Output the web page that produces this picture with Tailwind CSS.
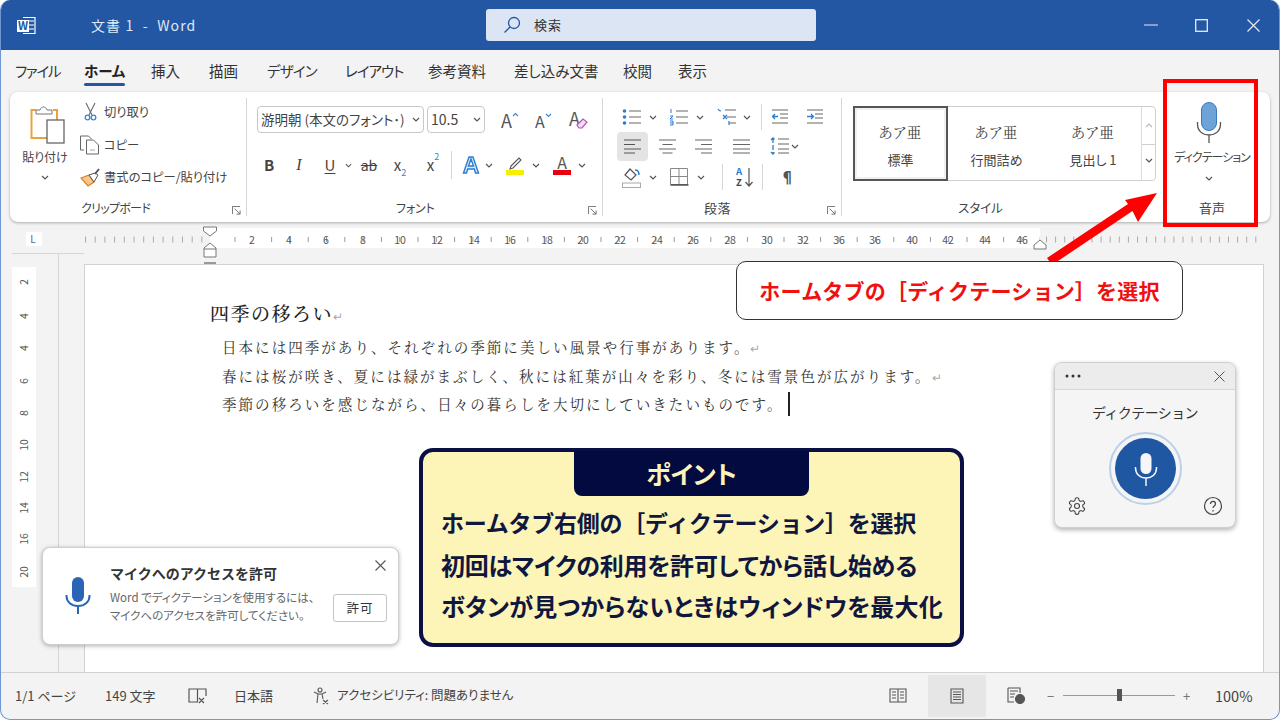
<!DOCTYPE html>
<html lang="ja"><head><meta charset="utf-8">
<script src="https://cdn.jsdelivr.net/npm/@tailwindcss/browser@4"></script></head>
<body class="bg-white">
<svg width="0" height="0" class="absolute"><defs>
<symbol id="chev" viewBox="0 0 8 5"><path d="M1 1l3 3 3-3" fill="none" stroke="#555" stroke-width="1.2"/></symbol>
<symbol id="launch" viewBox="0 0 10 10"><path d="M.5 9V.5H9M3 3l6 6M9 5v4H5" fill="none" stroke="#666" stroke-width="1"/></symbol>
</defs></svg>
<div class="relative w-[1280px] h-[720px] overflow-hidden font-['Noto_Sans_CJK_JP',sans-serif] [font-feature-settings:'palt'] text-[#333]">
 <div class="flex flex-col w-full h-full box-border border-x border-b border-[#6f97d1] rounded-[10px] overflow-hidden bg-[#f3f3f3]">
  <!-- title bar -->
  <div class="relative h-[50px] shrink-0 bg-[#2457a3] flex items-center -mx-px text-[#dfe8f6]">
   <svg class="ml-[16px]" width="20" height="20" viewBox="0 0 20 20"><path d="M7 2.5h12v16H7" fill="none" stroke="#fff" stroke-width="1.2"/><path d="M13 6h5M13 10h5M13 14h5" stroke="#fff" stroke-width="1.2"/><rect x="1" y="5" width="12" height="12" fill="#fff"/><text x="7" y="15" font-size="11" font-weight="700" text-anchor="middle" fill="#2457a3">W</text></svg>
   <div class="ml-[55px] text-[14px] tracking-[1.1px] w-[395px] whitespace-pre">文書 1  -  Word</div>
   <div class="w-[330px] h-[32px] bg-[#dbe5f3] rounded-[3px] flex items-center pl-[16px] text-[#333] text-[13px]">
    <svg width="20" height="20" viewBox="0 0 20 20" fill="none" stroke="#2457a3" stroke-width="1.3"><circle cx="12" cy="8" r="5.5"/><path d="M8 12l-5.5 5.5"/></svg>
    <span class="ml-[12px] tracking-[1px]">検索</span>
   </div>
   <svg class="ml-[328px]" width="14" height="2" viewBox="0 0 14 2"><path d="M0 1h14" stroke="#e4ecf8" stroke-width="1.2"/></svg>
   <svg class="ml-[37px]" width="13" height="13" viewBox="0 0 13 13"><rect x=".7" y=".7" width="11.6" height="11.6" fill="none" stroke="#e4ecf8" stroke-width="1.3"/></svg>
   <svg class="ml-[39px]" width="13" height="13" viewBox="0 0 13 13"><path d="M.5.5l12 12M12.5.5l-12 12" stroke="#e4ecf8" stroke-width="1.2"/></svg>
  </div>
  <!-- tabs -->
  <div class="h-[42px] shrink-0 flex items-center pl-[14px] text-[14.5px] text-[#333]">
   <span class="w-[69px] tracking-[-1.2px]">ファイル</span>
   <span class="w-[67px] relative font-bold text-[#222]">ホーム<span class="absolute left-0 top-[23px] w-[41px] h-[3px] bg-[#2457a3] rounded-sm"></span></span>
   <span class="w-[58px]">挿入</span>
   <span class="w-[58px]">描画</span>
   <span class="w-[78px] tracking-[-.8px]">デザイン</span>
   <span class="w-[83px] tracking-[-1px]">レイアウト</span>
   <span class="w-[86px]">参考資料</span>
   <span class="w-[109px]">差し込み文書</span>
   <span class="w-[55px]">校閲</span>
   <span>表示</span>
  </div>
  <!-- ribbon -->
  <div class="h-[130px] shrink-0 ml-[9px] mr-[9px] bg-white rounded-[8px] shadow-[0_1px_3px_rgba(0,0,0,.3)] flex text-[#444]">
   <!-- clipboard -->
   <div class="w-[236px] flex flex-col">
    <div class="h-[102px] flex">
     <div class="w-[70px] flex flex-col items-center pt-[13px]">
      <svg class="ml-[6px]" width="36" height="40" viewBox="0 0 36 40"><path d="M6 5H1.500v28H17" fill="none" stroke="#eba23c" stroke-width="2"/><path d="M23 5h4v10" fill="none" stroke="#eba23c" stroke-width="2"/><path d="M6 9V5h4c1-4 6-4 7 0h5v4z" fill="#fff" stroke="#777"/><rect x="17" y="15" width="17" height="23" fill="#fff" stroke="#666" stroke-width="1.300"/></svg>
      <div class="text-[12px] mt-[3px] leading-[18px] text-[#444]">貼り付け</div>
      <svg class="mt-[9px]" width="8" height="5"><use href="#chev"/></svg>
     </div>
     <div class="pt-[4px] flex flex-col text-[12.3px] text-[#444]">
      <div class="h-[33px] flex items-center"><svg class="w-[24px]" width="24" height="20" viewBox="0 0 24 20" fill="none"><path d="M6 1l6 12M15 1L9 13" stroke="#666" stroke-width="1.1"/><circle cx="7.5" cy="15.5" r="2.3" stroke="#3a86d0" stroke-width="1.3"/><circle cx="13.5" cy="15.5" r="2.3" stroke="#3a86d0" stroke-width="1.3"/></svg><span>切り取り</span></div>
      <div class="h-[33px] flex items-center"><svg class="w-[24px]" width="24" height="20" viewBox="0 0 24 20" fill="none" stroke="#666"><path d="M4 15H.5V1h8l3 3"/><path d="M6.500 5h7l5 5v9h-12z" fill="#fff"/><path d="M10 15h5" stroke="#aaa"/></svg><span>コピー</span></div>
      <div class="h-[33px] flex items-center"><svg class="w-[24px]" width="24" height="20" viewBox="0 0 24 20" fill="none"><path d="M1 10l8-3 5 7-6 4z" fill="#f6c88e" stroke="#e07f20" stroke-width="1.3"/><path d="M9 7l5 7 4-7-3-2z" fill="#fff" stroke="#555"/><path d="M15 6l4-5" stroke="#555" stroke-width="2"/></svg><span>書式のコピー/貼り付け</span></div>
     </div>
    </div>
    <div class="relative h-[28px] flex items-center pl-[71px] text-[12px] tracking-[-.7px]">クリップボード<svg class="absolute right-[5px] top-[12px]" width="9" height="9"><use href="#launch"/></svg></div>
   </div>
   <div class="w-px my-[6px] bg-[#d6d6d6]"></div>
   <!-- font -->
   <div class="w-[355px] flex flex-col">
    <div class="h-[102px] pl-[10px] pt-[14px]">
     <div class="flex items-center h-[27px]">
      <div class="w-[167px] h-[27px] box-border border border-[#c8c8c8] rounded-[4px] flex items-center justify-between px-[3px] text-[13.5px] whitespace-nowrap overflow-hidden"><span>游明朝 (本文のフォント･)</span><svg class="shrink-0" width="8" height="5"><use href="#chev"/></svg></div>
      <div class="ml-[3px] w-[58px] h-[27px] box-border border border-[#c8c8c8] rounded-[4px] flex items-center justify-between pl-[3px] pr-[3px] text-[14px]"><span>10.5</span><svg width="8" height="5"><use href="#chev"/></svg></div>
      <svg class="ml-[16px] overflow-visible" width="20" height="20" viewBox="0 0 20 20"><text x="0" y="17.500" font-size="18" fill="#555">A</text><path d="M12 6l2.500-2.500L17 6" fill="none" stroke="#3a86d0" stroke-width="1.100"/></svg>
      <svg class="ml-[14px] overflow-visible" width="20" height="20" viewBox="0 0 20 20"><text x="0" y="17.500" font-size="16" fill="#555">A</text><path d="M11 4l2.500 2.500L16 4" fill="none" stroke="#3a86d0" stroke-width="1.100"/></svg>
      <svg class="ml-[14px] overflow-visible" width="20" height="20" viewBox="0 0 20 20"><text x="0" y="16" font-size="18" fill="#555">A</text><path d="M8 15l6-6 4 3-5 6h-3z" fill="#f3dcf3" stroke="#b455b8" stroke-width="1.200"/></svg>
     </div>
     <div class="flex items-center h-[28px] mt-[18px] text-[#444]">
      <span class="w-[24px] text-center text-[15px] font-bold">B</span>
      <span class="ml-[6px] w-[24px] text-center text-[16px] italic font-['Liberation_Serif']">I</span>
      <span class="ml-[8px] w-[22px] text-center text-[15px] underline underline-offset-2">U</span>
      <svg class="ml-[4px]" width="7" height="5"><use href="#chev"/></svg>
      <span class="ml-[4px] w-[26px] text-center text-[14px] line-through">ab</span>
      <span class="ml-[5px] w-[26px] text-center text-[15px]">x<sub class="text-[9px] text-[#3a86d0] align-[-3px]">2</sub></span>
      <span class="ml-[7px] w-[26px] text-center text-[15px]">x<sup class="text-[9px] text-[#3a86d0] align-[6px]">2</sup></span>
      <div class="ml-[5px] w-px h-[28px] bg-[#d6d6d6]"></div>
      <svg class="ml-[10px]" width="18" height="18" viewBox="0 0 18 18"><path d="M1.500 17L7 1h4l5.500 16h-3l-1.200-4H5.700l-1.200 4zM6.500 10h5L9 3z" fill="#d8e9f8" stroke="#2b7cd3" stroke-width="1.4"/></svg>
      <svg class="ml-[5px]" width="8" height="5"><use href="#chev"/></svg>
      <svg class="ml-[12px]" width="20" height="20" viewBox="0 0 20 20" fill="none"><path d="M6 11l8-8 2 2-8 8-3 1z" stroke="#555" stroke-width="1.1"/><rect x="1" y="15" width="18" height="5" fill="#f7ee00"/></svg>
      <svg class="ml-[7px]" width="8" height="5"><use href="#chev"/></svg>
      <svg class="ml-[12px] overflow-visible" width="20" height="20" viewBox="0 0 20 20"><text x="10" y="14" font-size="16" text-anchor="middle" fill="#555">A</text><rect x="1" y="15" width="18" height="5" fill="#e8000f"/></svg>
      <svg class="ml-[6px]" width="8" height="5"><use href="#chev"/></svg>
     </div>
    </div>
    <div class="relative h-[28px] flex items-center pl-[149px] text-[12px] tracking-[-.2px]">フォント<svg class="absolute right-[5px] top-[12px]" width="9" height="9"><use href="#launch"/></svg></div>
   </div>
   <div class="w-px my-[6px] bg-[#d6d6d6]"></div>
   <!-- paragraph -->
   <div class="w-[238px] flex flex-col">
    <div class="h-[102px] pl-[14px] pt-[11px]">
     <div class="flex items-center h-[28px]">
      <svg width="20" height="16" viewBox="0 0 20 16" class="ml-[5px]"><path d="M7 2h12M7 8h12M7 14h12" stroke="#666" stroke-width="1.200"/><circle cx="2.500" cy="2" r="1.800" fill="#2b7cd3"/><circle cx="2.500" cy="8" r="1.800" fill="#2b7cd3"/><circle cx="2.500" cy="14" r="1.800" fill="#2b7cd3"/></svg>
      <svg class="ml-[7px]" width="8" height="5"><use href="#chev"/></svg>
      <svg class="ml-[12px]" width="20" height="18" viewBox="0 0 20 18"><path d="M7 3h12M7 9h12M7 15h12" stroke="#666" stroke-width="1.200"/><path d="M2 1v4M1 8h3L1 11h3M1 13h3v4H1M1 15h3" fill="none" stroke="#2b7cd3"/></svg>
      <svg class="ml-[7px]" width="8" height="5"><use href="#chev"/></svg>
      <svg class="ml-[13px]" width="20" height="18" viewBox="0 0 20 18"><path d="M8 2h11M10 9h9M12 15h7" stroke="#666" stroke-width="1.200"/><path d="M1 1c1 2 2 2 3 2M6 7l4 4M10 7l-4 4M12 13v4" fill="none" stroke="#2b7cd3" stroke-width="1.200"/></svg>
      <svg class="ml-[6px]" width="8" height="5"><use href="#chev"/></svg>
      <div class="ml-[10px] w-px h-[26px] bg-[#d6d6d6]"></div>
      <svg class="ml-[10px]" width="16" height="16" viewBox="0 0 16 16"><path d="M0 1h16M8 5h8M8 9h8M0 14h16" stroke="#666" stroke-width="1.100"/><path d="M0 7.500h6M3 5L.5 7.500 3 10" fill="none" stroke="#2b7cd3" stroke-width="1.300"/></svg>
      <svg class="ml-[19px]" width="16" height="16" viewBox="0 0 16 16"><path d="M0 1h16M8 5h8M8 9h8M0 14h16" stroke="#666" stroke-width="1.100"/><path d="M0 7.500h6M4 5l2.500 2.500L4 10" fill="none" stroke="#2b7cd3" stroke-width="1.300"/></svg>
     </div>
     <div class="flex items-center h-[30px]">
      <div class="w-[31px] h-[29px] rounded-[4px] bg-[#e4e4e4] flex items-center justify-center"><svg width="18" height="15" viewBox="0 0 18 15"><path d="M0 1h17M0 5.500h11M0 10h17M0 14h11" stroke="#555" stroke-width="1.200"/></svg></div>
      <svg class="ml-[11px]" width="18" height="15" viewBox="0 0 18 15"><path d="M0 1h17M3.500 5.500h10M0 10h17M3.500 14h10" stroke="#666" stroke-width="1.200"/></svg>
      <svg class="ml-[18px]" width="18" height="15" viewBox="0 0 18 15"><path d="M0 1h17M6 5.500h11M0 10h17M6 14h11" stroke="#666" stroke-width="1.200"/></svg>
      <svg class="ml-[20px]" width="18" height="15" viewBox="0 0 18 15"><path d="M0 1h17M0 5.500h17M0 10h17M0 14h17" stroke="#666" stroke-width="1.200"/></svg>
      <svg class="ml-[19px]" width="20" height="18" viewBox="0 0 20 18"><path d="M8 2h11M8 7h11M8 12h11M8 16h11" stroke="#666" stroke-width="1.200"/><path d="M3 1v16M1 3l2-2 2 2M1 15l2 2 2-2" fill="none" stroke="#2b7cd3" stroke-width="1.300" stroke-dasharray="5 2"/></svg>
      <svg class="ml-[1px]" width="8" height="5"><use href="#chev"/></svg>
     </div>
     <div class="flex items-center h-[30px] mt-[1px]">
      <svg class="ml-[5px]" width="20" height="21" viewBox="0 0 20 21" fill="none"><path d="M3 8l5-6 6 6-5 5z" fill="#fff" stroke="#555" stroke-width="1.200"/><path d="M13 3c3 0 4 2 4 5" stroke="#2b7cd3" stroke-width="1.500"/><rect x=".5" y="16" width="18" height="4.500" stroke="#aaa"/></svg>
      <svg class="ml-[7px]" width="8" height="5"><use href="#chev"/></svg>
      <svg class="ml-[13px]" width="19" height="18" viewBox="0 0 19 18" fill="none" stroke="#666"><path d="M.5.5h17v16H.5zM9 .5v16M.5 8.500h17" stroke="#888"/><path d="M.5 17h18" stroke="#444" stroke-width="1.400"/></svg>
      <svg class="ml-[8px]" width="8" height="5"><use href="#chev"/></svg>
      <div class="ml-[17px] w-px h-[26px] bg-[#d6d6d6]"></div>
      <div class="ml-[11px] w-[20px] h-[22px] flex items-center">
       <div class="w-[10px] flex flex-col items-center text-[9.5px] leading-[11px] font-bold"><span class="text-[#2b7cd3]">A</span><span class="text-[#444]">Z</span></div>
       <svg width="10" height="22" viewBox="0 0 10 22" fill="none"><path d="M5 2v17M1.500 16L5 20l3.500-4" stroke="#555" stroke-width="1.200"/></svg>
      </div>
      <div class="ml-[8px] w-px h-[26px] bg-[#d6d6d6]"></div>
      <span class="ml-[17px] text-[15px] font-bold text-[#555]">¶</span>
     </div>
    </div>
    <div class="relative h-[28px] flex items-center pl-[101px] text-[13px] tracking-[.5px]">段落<svg class="absolute right-[5px] top-[12px]" width="9" height="9"><use href="#launch"/></svg></div>
   </div>
   <div class="w-px my-[6px] bg-[#d6d6d6]"></div>
   <!-- styles -->
   <div class="w-[317px] flex flex-col">
    <div class="h-[102px] pl-[11px] pt-[14px]">
     <div class="w-[303px] h-[75px] box-border border border-[#cfcfcf] rounded-[4px] flex">
      <div class="w-[95px] -ml-px -my-px h-[75px] box-border border-2 border-[#555] flex flex-col items-center shadow-[inset_0_0_0_2px_#f0f0f0]"><span class="mt-[14px] text-[14.5px] tracking-[1px] leading-[20px] font-['Noto_Serif_CJK_JP','Noto_Sans_CJK_JP',serif]">あア亜</span><span class="mt-[9px] text-[13px] leading-[18px]">標準</span></div>
      <div class="w-[97px] flex flex-col items-center"><span class="mt-[15px] text-[14.5px] tracking-[1px] leading-[20px] font-['Noto_Serif_CJK_JP','Noto_Sans_CJK_JP',serif]">あア亜</span><span class="mt-[9px] text-[13px] leading-[18px]">行間詰め</span></div>
      <div class="w-[96px] flex flex-col items-center"><span class="mt-[15px] text-[14.5px] tracking-[1px] leading-[20px] font-['Noto_Serif_CJK_JP','Noto_Sans_CJK_JP',serif]">あア亜</span><span class="mt-[9px] text-[13px] leading-[18px]">見出し 1</span></div>
      <div class="flex-1 border-l border-[#dcdcdc] flex flex-col items-center">
       <svg class="mt-[16px]" width="8" height="5" viewBox="0 0 8 5"><path d="M1 4l3-3 3 3" fill="none" stroke="#bbb" stroke-width="1.200"/></svg>
       <div class="mt-[16px] w-full h-px bg-[#cfcfcf]"></div>
       <svg class="mt-[13px]" width="8" height="5"><use href="#chev"/></svg>
      </div>
     </div>
    </div>
    <div class="h-[28px] flex items-center pl-[116px] text-[12.5px]">スタイル</div>
   </div>
   <!-- voice -->
   <div class="flex-1 flex flex-col">
    <div class="h-[102px] flex flex-col items-center w-[100px] pt-[10px]">
     <svg width="26" height="41" viewBox="0 0 26 41" fill="none"><rect x="5.500" y=".5" width="15" height="28" rx="7.500" fill="#6ea3d8" stroke="#3a78c0"/><path d="M1.500 20v2c0 7 5 11 11.500 11s11.500-4 11.500-11v-2M13 33v8" stroke="#555" stroke-width="1.300"/></svg>
     <span class="ml-[6px] mt-[5px] text-[12px] leading-[18px] tracking-[-1px] whitespace-nowrap">ディクテーション</span>
     <svg class="mt-[10px]" width="8" height="5"><use href="#chev"/></svg>
    </div>
    <div class="h-[28px] w-[100px] pl-[6px] flex items-center justify-center text-[13px]">音声</div>
   </div>
  </div>
  <!-- ruler -->
  <svg class="shrink-0 mt-[4px] -ml-px" width="1280" height="27" viewBox="0 0 1280 27" fill="#666" font-size="10.500" text-anchor="middle">
   <rect x="210" y="2" width="830" height="20" fill="#fff"/>
   <rect x="26" y="6" width="16" height="14" fill="#fff"/>
   <text x="33" y="17" font-size="10">L</text>
   <path d="M85 13.500H205" stroke="#aaa" stroke-width="6" stroke-dasharray="1 8.700"/>
   <path d="M234.500 13.500H1040" stroke="#999" stroke-width="5" stroke-dasharray="1 17.300"/>
   <path d="M1046 13.500H1258" stroke="#aaa" stroke-width="6" stroke-dasharray="1 8.100"/>
   <path d="M203.500 1h13v4l-6.500 5-6.500-5z" fill="#fff" stroke="#777"/>
   <path d="M1034 23v-4l6-5 6 5v4z" fill="#fff" stroke="#777"/>
   <g fill="#555"><rect x="240" y="4" width="24" height="17" fill="#fff"/>
   <text x="252" y="18">2</text><text x="289" y="18">4</text><text x="326" y="18">6</text><text x="363" y="18">8</text><text x="400" y="18">10</text><text x="437" y="18">12</text><text x="474" y="18">14</text><text x="510" y="18">16</text><text x="547" y="18">18</text><text x="583" y="18">20</text><text x="620" y="18">22</text><text x="657" y="18">24</text><text x="693" y="18">26</text><text x="730" y="18">28</text><text x="767" y="18">30</text><text x="803" y="18">32</text><text x="839" y="18">36</text><text x="875" y="18">36</text><text x="912" y="18">40</text><text x="948" y="18">42</text><text x="985" y="18">44</text><text x="1022" y="18">46</text></g>
  </svg>
  <!-- doc -->
  <div class="flex-1 flex relative -ml-px min-h-0">
   <svg class="shrink-0" width="84" height="419" viewBox="0 0 84 419" fill="#555" font-size="10.500" text-anchor="middle">
    <path d="M12 .5H84" stroke="#d6d6d6" fill="none"/>
    <path d="M58.500 0V419" stroke="#d6d6d6" fill="none"/>
    <rect x="12" y="14" width="24" height="320" fill="#fff"/>
    <g transform="translate(24 0)"><text transform="translate(4 29) rotate(-90)">2</text><text transform="translate(4 63) rotate(-90)">4</text><text transform="translate(4 95) rotate(-90)">4</text><text transform="translate(4 128) rotate(-90)">6</text><text transform="translate(4 160) rotate(-90)">8</text><text transform="translate(4 192) rotate(-90)">10</text><text transform="translate(4 224) rotate(-90)">12</text><text transform="translate(4 255) rotate(-90)">14</text><text transform="translate(4 286) rotate(-90)">16</text><text transform="translate(4 319) rotate(-90)">20</text></g>
   </svg>
   <div class="flex-1 mt-[11px] mr-[15px] bg-white border-l border-t border-r border-[#d2d2d2] pt-[36px] pl-[125px] font-['Noto_Serif_CJK_JP','Noto_Sans_CJK_JP',serif] [font-feature-settings:normal] text-[#333]">
    <div class="text-[19px] font-medium leading-[24px] tracking-[1.500px] text-[#222] whitespace-nowrap">四季の移ろい<span class="text-[#aaa] text-[12px] font-normal">↵</span></div>
    <div class="mt-[5px] pl-[12px] text-[14.500px] leading-[27.500px] tracking-[2.050px] whitespace-nowrap">
     <div>日本には四季があり、それぞれの季節に美しい風景や行事があります。<span class="text-[#aaa] text-[12px]">↵</span></div>
     <div>春には桜が咲き、夏には緑がまぶしく、秋には紅葉が山々を彩り、冬には雪景色が広がります。<span class="text-[#aaa] text-[12px]">↵</span></div>
     <div class="flex items-center">季節の移ろいを感じながら、日々の暮らしを大切にしていきたいものです。<span class="inline-block ml-[4px] w-[2px] h-[24px] bg-[#222]"></span></div>
    </div>
   </div>
  </div>
  <!-- status -->
  <div class="h-[47px] shrink-0 border-t border-[#d2d2d2] -ml-px flex items-center text-[13px] text-[#444] whitespace-nowrap pb-[1px]">
   <span class="ml-[15px] w-[90px]">1/1 ページ</span>
   <span class="w-[83px]">149 文字</span>
   <svg width="19" height="17" viewBox="0 0 19 17" fill="none" stroke="#555" stroke-width="1.200"><path d="M9.500 2H1v13h8.500zM9.500 2H18v7M11 11l5 5M16 11l-5 5"/></svg>
   <span class="ml-[27px] w-[79px]">日本語</span>
   <svg width="18" height="18" viewBox="0 0 18 18" fill="none" stroke="#555" stroke-width="1.100"><circle cx="7" cy="3" r="2"/><path d="M1 5l4 2h4l4-2M5 7l-1 9M9 7l1 5M10 13l5 4M15 13l-5 4"/></svg>
   <span class="ml-[6px] w-[552px] text-[12.500px]">アクセシビリティ: 問題ありません</span>
   <svg width="18" height="15" viewBox="0 0 18 15" fill="none" stroke="#555" stroke-width="1.100"><path d="M1 1h16v13H1zM9 1v13M3 4h4M3 7h4M3 10h4M11 4h4M11 7h4M11 10h4"/></svg>
   <div class="ml-[21px] w-[58px] h-[42px] bg-[#e6e6e6] flex items-center justify-center"><svg width="14" height="16" viewBox="0 0 14 16" fill="none" stroke="#555" stroke-width="1.100"><path d="M1 1h12v14H1zM3 4h8M3 6.500h8M3 9h8M3 11.500h8"/></svg></div>
   <svg class="ml-[21px]" width="18" height="17" viewBox="0 0 18 17" fill="none" stroke="#555" stroke-width="1.100"><path d="M1 1h12v5M1 1v14h6M3 4h8M3 7h5M3 10h4"/><circle cx="13" cy="12" r="4.500" fill="#555"/></svg>
   <span class="ml-[22px] text-[#777] w-[16px]">−</span>
   <div class="relative w-[112px] h-px bg-[#999]"><div class="absolute left-[54px] -top-[6px] w-[5px] h-[12px] bg-[#555]"></div></div>
   <span class="ml-[8px] text-[#777] w-[32px]">+</span>
   <span class="text-[14.500px]">100%</span>
  </div>
 </div>

 <!-- overlays -->
 <svg class="absolute left-0 top-0 pointer-events-none" width="1280" height="720" fill="none">
  <path d="M204 257v-9l6-5 6 5v9zM204 249h12" fill="#fff" stroke="#777"/><path d="M204 263h12" stroke="#999" stroke-width="2"/>
  <polygon points="1157,193 1138,222 1132.500,211 1052,265 1047,258 1128,204 1125,200" fill="#f00"/>
 </svg>
 <div class="absolute left-[1163px] top-[79px] w-[95px] h-[148px] box-border border-4 border-[#f00]"></div>
 <div class="absolute left-[736px] top-[261px] w-[447px] h-[59px] box-border bg-white border-[1.500px] border-[#333] rounded-[10px] flex items-center justify-center text-[#f01010] font-bold text-[21px] tracking-[.2px] [font-feature-settings:normal] whitespace-nowrap">ホームタブの［ディクテーション］を選択</div>

 <div class="absolute left-[1054px] top-[362px] w-[182px] h-[166px] box-border bg-[#f5f5f5] border border-[#cfcfcf] rounded-[8px] shadow-[0_2px_5px_rgba(0,0,0,.3)] overflow-hidden">
  <div class="h-[27px] bg-[#ececec] border-b border-[#d6d6d6] flex items-center justify-between pl-[10px] pr-[10px]">
   <svg width="16" height="4"><circle cx="2" cy="2" r="1.500" fill="#333"/><circle cx="8" cy="2" r="1.500" fill="#333"/><circle cx="14" cy="2" r="1.500" fill="#333"/></svg>
   <svg width="11" height="11" viewBox="0 0 11 11"><path d="M.5.500l10 10M10.500.500l-10 10" stroke="#555"/></svg>
  </div>
  <div class="text-center mt-[12px] text-[14px] leading-[20px] text-[#333] [font-feature-settings:normal] tracking-[-.6px]">ディクテーション</div>
  <div class="relative flex items-start justify-between px-[12px]">
   <div class="absolute left-[54px] top-[10px] w-[73px] h-[73px] rounded-full border-2 border-[#b9d0e8] flex items-center justify-center">
    <div class="w-[61px] h-[61px] rounded-full bg-[#1f57a3] flex items-center justify-center">
     <svg width="24" height="34" viewBox="0 0 24 34" fill="none"><rect x="6.500" y="1" width="11" height="21" rx="5.500" fill="#f4f6fa"/><path d="M1.500 15v1c0 6 4.500 10 10.500 10s10.500-4 10.500-10v-1M12 26v8" stroke="#f4f6fa" stroke-width="1.500"/></svg>
    </div>
   </div>
   <svg class="mt-[74px]" width="20" height="20" viewBox="0 0 24 24" fill="none" stroke="#444" stroke-width="1.300"><path d="M12.220 2h-.44a2 2 0 0 0-2 2v.18a2 2 0 0 1-1 1.730l-.43.25a2 2 0 0 1-2 0l-.15-.08a2 2 0 0 0-2.730.73l-.22.38a2 2 0 0 0 .73 2.730l.15.1a2 2 0 0 1 1 1.720v.51a2 2 0 0 1-1 1.740l-.15.09a2 2 0 0 0-.73 2.730l.22.38a2 2 0 0 0 2.730.73l.15-.08a2 2 0 0 1 2 0l.43.25a2 2 0 0 1 1 1.730V20a2 2 0 0 0 2 2h.44a2 2 0 0 0 2-2v-.18a2 2 0 0 1 1-1.730l.43-.25a2 2 0 0 1 2 0l.15.08a2 2 0 0 0 2.730-.73l.22-.39a2 2 0 0 0-.73-2.730l-.15-.08a2 2 0 0 1-1-1.740v-.5a2 2 0 0 1 1-1.740l.15-.09a2 2 0 0 0 .73-2.730l-.22-.38a2 2 0 0 0-2.730-.73l-.15.08a2 2 0 0 1-2 0l-.43-.25a2 2 0 0 1-1-1.730V4a2 2 0 0 0-2-2z"/><circle cx="12" cy="12" r="3"/></svg>
   <svg class="mt-[74px]" width="20" height="20" viewBox="0 0 20 20" fill="none" stroke="#444" stroke-width="1.200"><circle cx="10" cy="10" r="8.500"/><path d="M7.500 8c0-3.500 5-3.500 5 0 0 2-2.500 2-2.500 4M10 14v1.500"/></svg>
  </div>
 </div>

 <div class="absolute left-[42px] top-[547px] w-[357px] h-[98px] box-border bg-white border border-[#cfcfcf] rounded-[8px] shadow-[0_1px_4px_rgba(0,0,0,.3)] flex">
  <svg class="ml-[22px] mt-[28px]" width="26" height="38" viewBox="0 0 26 38" fill="none"><rect x="7" y="1" width="12" height="25" rx="6" fill="#2a65b5"/><path d="M1.500 19v1c0 6 5 10 11.500 10s11.500-4 11.500-10v-1M13 30v8" stroke="#2a65b5" stroke-width="2"/></svg>
  <div class="ml-[19px] mt-[14px] whitespace-nowrap">
   <div class="text-[14px] font-bold leading-[22px] text-[#333] [font-feature-settings:normal]">マイクへのアクセスを許可</div>
   <div class="mt-[4px] text-[11.500px] leading-[18px] text-[#666]">Word でディクテーションを使用するには、<br>マイクへのアクセスを許可してください。</div>
  </div>
  <svg class="absolute right-[12px] top-[12px]" width="11" height="11" viewBox="0 0 11 11"><path d="M.5.500l10 10M10.500.500l-10 10" stroke="#555" stroke-width="1.100"/></svg>
  <div class="absolute left-[290px] top-[46px] w-[54px] h-[28px] box-border border border-[#c4c4c4] rounded-[3px] flex items-center justify-center text-[12.500px] tracking-[1px] text-[#333]">許可</div>
 </div>

 <div class="absolute left-[419px] top-[448px] w-[545px] h-[199px] box-border bg-[#fdf4b8] border-[4px] border-[#0a1045] rounded-[14px] text-[#10173f] font-bold text-[24px] leading-[41.500px] pl-[18px] whitespace-nowrap">
  <div class="absolute left-[151px] -top-[1px] w-[235px] h-[45px] rounded-b-[8px] bg-[#020a40] text-[#fdf4b8] flex items-center justify-center text-[25px]">ポイント</div>
  <div class="pt-[50px] text-[23px] tracking-[-.25px] [font-feature-settings:normal]">ホームタブ右側の［ディクテーション］を選択</div>
  <div class="tracking-[-.2px]">初回はマイクの利用を許可してから話し始める</div>
  <div class="tracking-[.2px]">ボタンが見つからないときはウィンドウを最大化</div>
 </div>
</div>
</body></html>
